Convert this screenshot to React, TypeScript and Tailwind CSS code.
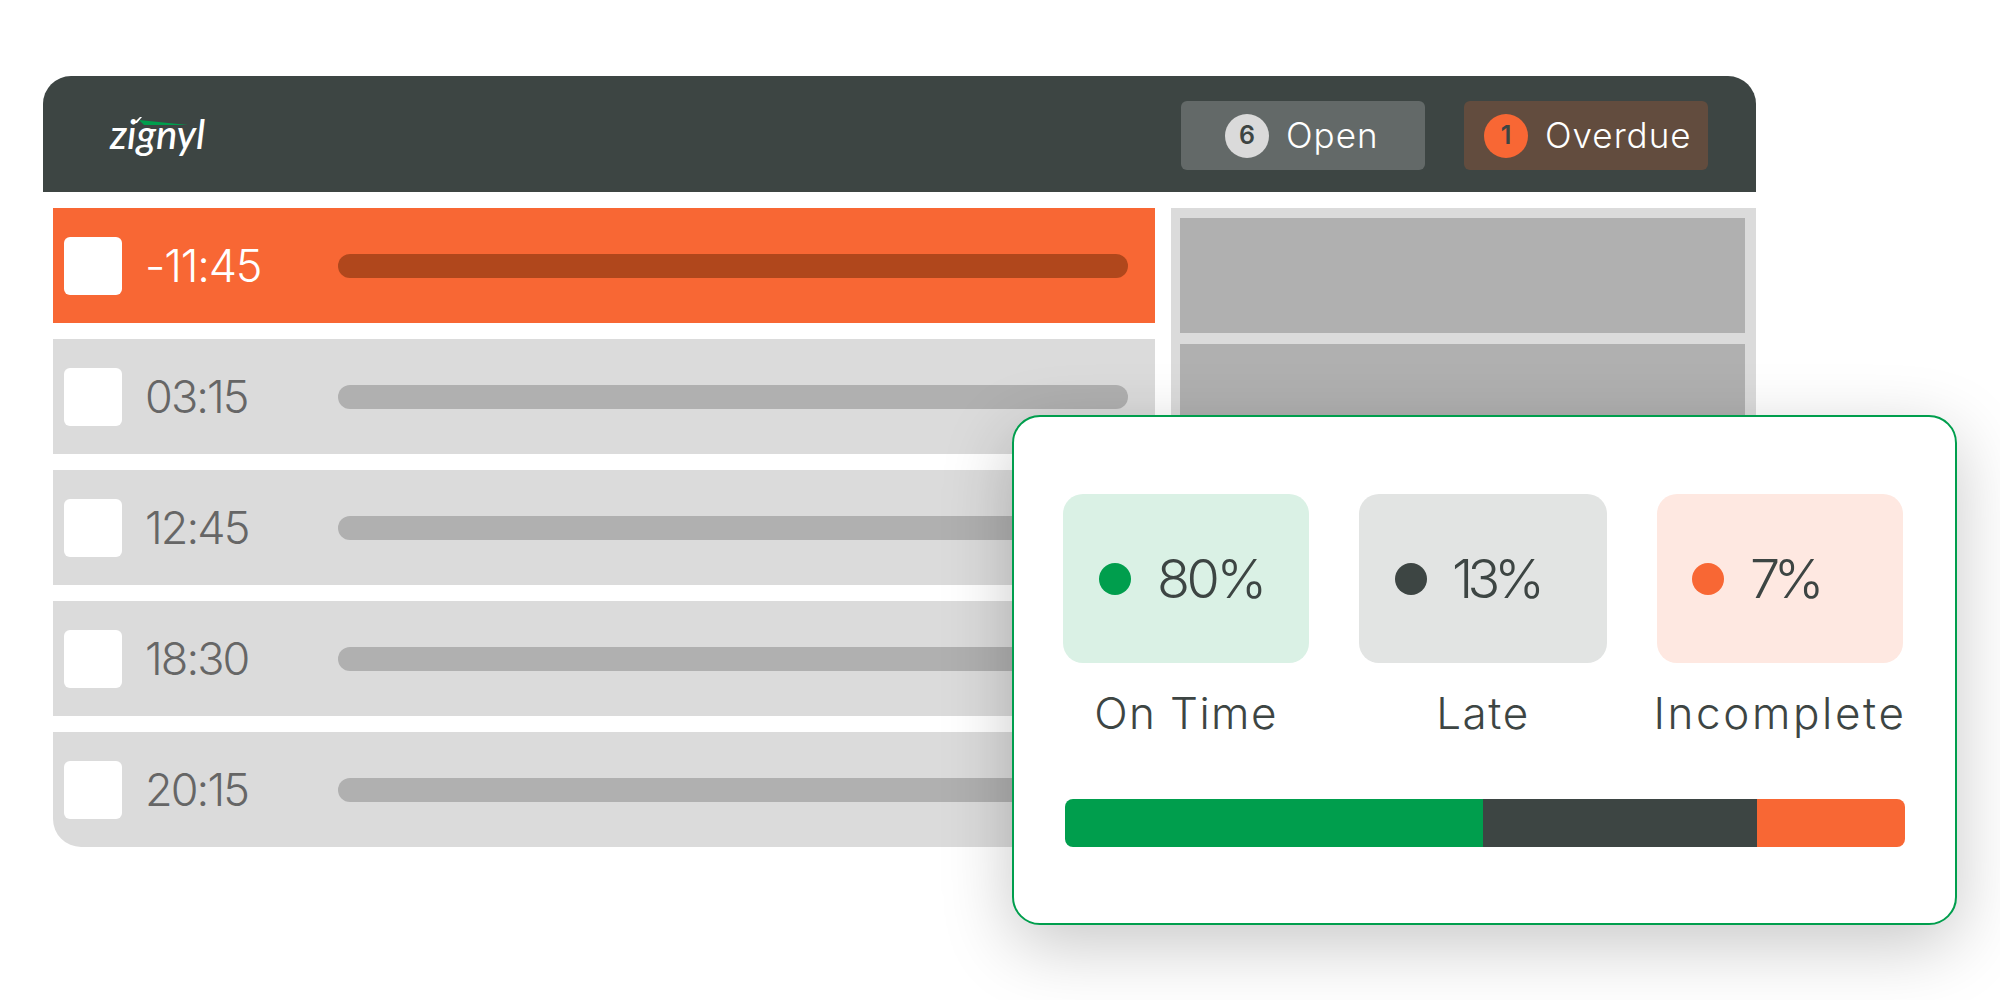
const rows = [
  { time: "03:15" },
  { time: "12:45" },
  { time: "18:30" },
  { time: "20:15", last: true },
];

function Logo() {
  return (
    <div className="relative w-[96px] h-[46px] flex items-center">
      <span className="font-['Lato',sans-serif] italic font-medium text-[40px] leading-none text-white whitespace-nowrap">zignyl</span>
      <svg className="absolute left-0 top-0" width="100" height="46" viewBox="0 0 100 46" fill="none">
        <path d="M24 12 L30 6 L32 6 L27 12 Z" fill="#ffffff" />
        <path d="M29 9 L78 14 L34 14 Z" fill="#009e4d" />
      </svg>
    </div>
  );
}

export default function App() {
  return (
    <div className="relative w-[2000px] h-[1000px] bg-white overflow-hidden font-['Inter',sans-serif]">
      <div className="pl-[43px] pt-[76px] w-[1756px]">
        <header className="h-[116px] w-[1713px] bg-[#3d4543] rounded-t-[28px] flex items-center pl-[67px] pr-[48px]">
          <Logo />
          <div className="ml-auto flex gap-[39px] pt-[3px]">
            <div className="w-[244px] h-[69px] bg-[#636968] rounded-[6px] flex items-center pl-[44px]">
              <span className="w-[44px] h-[44px] rounded-full bg-[#dadada] text-[#3d4543] text-[25px] font-semibold flex items-center justify-center">6</span>
              <span className="ml-[17px] text-white text-[35px] font-light tracking-[1px]">Open</span>
            </div>
            <div className="w-[244px] h-[69px] bg-[#624c3e] rounded-[6px] flex items-center pl-[20px]">
              <span className="w-[44px] h-[44px] rounded-full bg-[#f86734] text-[#3d4543] text-[25px] font-semibold flex items-center justify-center">1</span>
              <span className="ml-[17px] text-white text-[35px] font-light tracking-[1px]">Overdue</span>
            </div>
          </div>
        </header>
        <div className="mt-[16px] ml-[10px] flex gap-[16px]">
          <div className="w-[1102px] flex flex-col gap-[16px]">
            <div className="h-[115px] bg-[#f86734] flex items-center pl-[11px] pr-[27px]">
              <div className="w-[58px] h-[58px] bg-white rounded-[6px]" />
              <div className="ml-[23px] w-[193px] text-white text-[45px] font-light tracking-[-1.2px]">-11:45</div>
              <div className="flex-1 h-[24px] rounded-full bg-[#b0471c]" />
            </div>
            {rows.map((r) => (
              <div key={r.time} className={`h-[115px] bg-[#dbdbdb] flex items-center pl-[11px] pr-[27px] ${r.last ? "rounded-bl-[28px]" : ""}`}>
                <div className="w-[58px] h-[58px] bg-white rounded-[6px]" />
                <div className="ml-[23px] w-[193px] text-[#666666] text-[45px] font-light tracking-[-1.9px]">{r.time}</div>
                <div className="flex-1 h-[24px] rounded-full bg-[#b0b0b0]" />
              </div>
            ))}
          </div>
          <div className="w-[585px] h-[400px] bg-[#dbdbdb] pt-[10px] pl-[9px] pr-[11px] flex flex-col gap-[11px]">
            <div className="h-[115px] bg-[#b0b0b0]" />
            <div className="h-[115px] bg-[#b0b0b0]" />
          </div>
        </div>
      </div>

      <div className="absolute left-[1012px] top-[415px] w-[945px] h-[510px] bg-white border-2 border-[#009e4d] rounded-[28px] shadow-[0_20px_70px_rgba(0,0,0,0.22)] pl-[49px] pt-[77px] text-[#3d4543]">
        <div className="flex gap-[50px]">
          <div className="w-[246px] flex flex-col items-center">
            <div className="w-full h-[169px] rounded-[20px] bg-[#daf1e5] flex items-center pl-[36px] gap-[26px]">
              <span className="w-[32px] h-[32px] rounded-full bg-[#009e4d]" />
              <span className="text-[54px] font-light tracking-[-3.4px]">80%</span>
            </div>
            <div className="mt-[20px] text-[44px] font-light leading-[60px] whitespace-nowrap tracking-[1.4px]">On Time</div>
          </div>
          <div className="w-[248px] flex flex-col items-center">
            <div className="w-full h-[169px] rounded-[20px] bg-[#e2e4e3] flex items-center pl-[36px] gap-[25px]">
              <span className="w-[32px] h-[32px] rounded-full bg-[#3d4543]" />
              <span className="text-[54px] font-light tracking-[-5.8px]">13%</span>
            </div>
            <div className="mt-[20px] text-[44px] font-light leading-[60px] whitespace-nowrap tracking-[1.6px]">Late</div>
          </div>
          <div className="w-[246px] flex flex-col items-center">
            <div className="w-full h-[169px] rounded-[20px] bg-[#fee8e1] flex items-center pl-[35px] gap-[26px]">
              <span className="w-[32px] h-[32px] rounded-full bg-[#f86734]" />
              <span className="text-[54px] font-light tracking-[-6.5px]">7%</span>
            </div>
            <div className="mt-[20px] text-[44px] font-light leading-[60px] whitespace-nowrap tracking-[2.6px]">Incomplete</div>
          </div>
        </div>
        <div className="mt-[56px] ml-[2px] w-[840px] h-[48px] rounded-[8px] overflow-hidden flex">
          <div className="w-[418px] bg-[#009e4d]" />
          <div className="w-[274px] bg-[#3d4543]" />
          <div className="flex-1 bg-[#f86734]" />
        </div>
      </div>
    </div>
  );
}
